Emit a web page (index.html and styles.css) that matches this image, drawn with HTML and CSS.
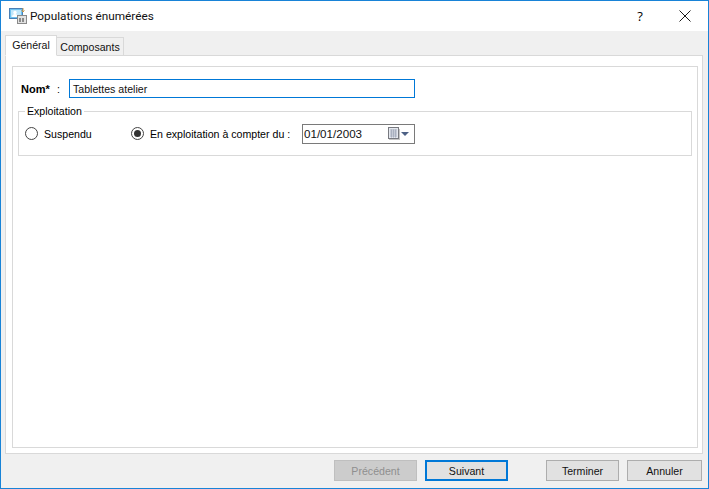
FILE: index.html
```html
<!DOCTYPE html>
<html lang="fr">
<head>
<meta charset="utf-8">
<title>Populations énumérées</title>
<link rel="stylesheet" href="styles.css">
</head>
<body>
<div class="window">
  <header class="titlebar">
    <svg class="app-icon" width="18" height="18" viewBox="0 0 18 18">
      <rect x="0.5" y="1.5" width="13" height="10" fill="#6ec1f0" stroke="#4a7fb5"/>
      <rect x="2" y="3" width="10" height="7" fill="#bfe6fb"/>
      <circle cx="6" cy="5.5" r="1.7" fill="#fff"/>
      <path d="M3 10c0-2 1.5-3 3-3s3 1 3 3z" fill="#fff"/>
      <rect x="8.5" y="8.5" width="9" height="8" fill="#e2e2e2" stroke="#8a8a8a"/>
      <path d="M11 11v4M14 11v4" stroke="#666" stroke-width="1.4"/>
      <path d="M14 1v4M12.5 3.5 14 5l1.5-1.5" fill="none" stroke="#c99a4a"/>
    </svg>
    <span class="title">Populations énumérées</span>
    <span class="help">?</span>
    <svg class="close" width="12" height="12" viewBox="0 0 12 12"><path d="M.5.5l11 11M11.500.5l-11 11" stroke="#1a1a1a" fill="none"/></svg>
  </header>
  <main class="body">
    <nav class="tabs">
      <div class="tab active">Général</div>
      <div class="tab">Composants</div>
    </nav>
    <section class="tab-page">
      <div class="panel">
        <div class="name-row">
          <label class="name-label"><b class="name-strong">Nom*</b><span class="colon">:</span></label>
          <div class="name-input">Tablettes atelier</div>
        </div>
        <fieldset class="group">
          <legend>Exploitation</legend>
          <div class="group-row">
            <span class="radio"></span>
            <span class="radio-label first">Suspendu</span>
            <span class="radio checked"></span>
            <span class="radio-label">En exploitation à compter du :</span>
            <div class="date">
              <span class="date-text">01/01/2003</span>
              <svg class="cal" width="12" height="13" viewBox="0 0 12 13">
                <rect x="0.500" y="0.500" width="10" height="11" fill="#e4e7ee" stroke="#77797f"/>
                <path d="M2 3h7M2 5h7M2 7h7M2 9h7M3.500 2.500v8M5.500 2.500v8M7.500 2.500v8" stroke="#a9b0bf"/>
                <path d="M1 12.500h11M11.500 2v11" stroke="#c4c4c4"/>
              </svg>
              <span class="arrow"></span>
            </div>
          </div>
        </fieldset>
      </div>
    </section>
    <footer class="buttons">
      <div class="btn prev disabled">Précédent</div>
      <div class="btn next default">Suivant</div>
      <div class="btn finish">Terminer</div>
      <div class="btn cancel">Annuler</div>
    </footer>
  </main>
</div>
</body>
</html>
```
FILE: styles.css
```css
* { box-sizing: border-box; }
html, body { margin: 0; padding: 0; }
body {
  width: 709px;
  height: 489px;
  overflow: hidden;
  font-family: "Liberation Sans", Arial, sans-serif;
  font-size: 10.6px;
  color: #000;
}
.window {
  width: 709px;
  height: 489px;
  border: 1px solid #1883d7;
  display: flex;
  flex-direction: column;
  background: #f0f0f0;
}
.titlebar {
  height: 30px;
  background: #fff;
  display: flex;
  align-items: center;
  padding: 0 0 0 8px;
  flex: none;
}
.app-icon { flex: none; margin-right: 3px; }
.title {
  font-family: Roboto, sans-serif;
  font-size: 11.8px;
  flex: 1;
  color: #111;
}
.help {
  font-family: "Open Sans", sans-serif;
  font-size: 13px;
  width: 12px;
  margin-right: 33px;
  text-align: center;
}
.close { margin-right: 17px; flex: none; }
.body {
  flex: 1;
  display: flex;
  flex-direction: column;
  min-height: 0;
  padding: 0 5px 0 4px;
}
.tabs {
  display: flex;
  align-items: flex-end;
  height: 25px;
  flex: none;
  position: relative;
  z-index: 1;
  margin-bottom: -1px;
}
.tab {
  height: 19px;
  padding: 3px 0 0;
  width: 67px;
  text-align: center;
  border: 1px solid #d9d9d9;
  border-left: 0;
  background: #f0f0f0;
  color: #111;
}
.tab.active {
  height: 21px;
  width: 52px;
  background: #fff;
  border-left: 1px solid #d9d9d9;
  border-bottom-color: #fff;
}
.tab-page {
  height: 399px;
  flex: none;
  border: 1px solid #d9d9d9;
  background: #fff;
  padding: 10px 4px 5px 6px;
}
.panel {
  height: 100%;
  border: 1px solid #d9d9d9;
  padding: 12px 5px 0 5px;
}
.name-row {
  display: flex;
  align-items: center;
  height: 19px;
  padding-left: 3px;
}
.name-label { width: 48px; flex: none; display: flex; }
.name-strong { font-size: 11px; width: 36px; flex: none; }
.colon { flex: none; }
.name-input {
  width: 346px;
  height: 19px;
  border: 1px solid #0078d7;
  padding: 2px 0 0 3px;
  line-height: 14px;
  color: #111;
}
.group {
  margin: 7px 0 0;
  padding: 0 6px 0 6px;
  height: 51px;
  border: 1px solid #d9d9d9;
}
.group legend {
  padding: 0 2px 0 2px;
  margin-left: 0;
  line-height: 12px;
  height: 12px;
}
.group-row {
  display: flex;
  align-items: center;
  height: 19px;
  margin-top: 7px;
}
.radio {
  width: 13px;
  height: 13px;
  border: 1px solid #444;
  border-radius: 50%;
  flex: none;
  margin-right: 6px;
  background: #fff;
  display: flex;
  align-items: center;
  justify-content: center;
}
.radio.checked::after {
  content: "";
  width: 7px;
  height: 7px;
  border-radius: 50%;
  background: #333;
}
.radio-label { flex: none; margin-right: 12px; width: 140px; white-space: nowrap; }
.radio-label.first { width: 47px; margin-right: 40px; }
.date {
  width: 113px;
  height: 20px;
  flex: none;
  border: 1px solid #7a7a7a;
  background: #fff;
  display: flex;
  align-items: center;
  padding-left: 1px;
}
.date-text { flex: 1; font-size: 11.6px; color: #111; }
.cal { flex: none; margin-right: 1px; }
.arrow {
  width: 0;
  height: 0;
  border-left: 4px solid transparent;
  border-right: 4px solid transparent;
  border-top: 4px solid #4d6185;
  margin-right: 5px;
  flex: none;
}
.buttons {
  flex: 1;
  display: flex;
  align-items: flex-start;
  padding-top: 6px;
  justify-content: flex-end;
}
.btn {
  height: 21px;
  border: 1px solid #adadad;
  background: #e1e1e1;
  text-align: center;
  line-height: 20px;
  color: #111;
  flex: none;
}
.prev { width: 83px; margin-right: 8px; }
.next { width: 83px; margin-right: 38px; }
.finish { width: 73px; margin-right: 8px; }
.cancel { width: 75px; margin-right: 1px; }
.disabled { background: #cccccc; border-color: #bfbfbf; color: #8f8f8f; }
.default { border: 2px solid #0078d7; line-height: 18px; }
```
